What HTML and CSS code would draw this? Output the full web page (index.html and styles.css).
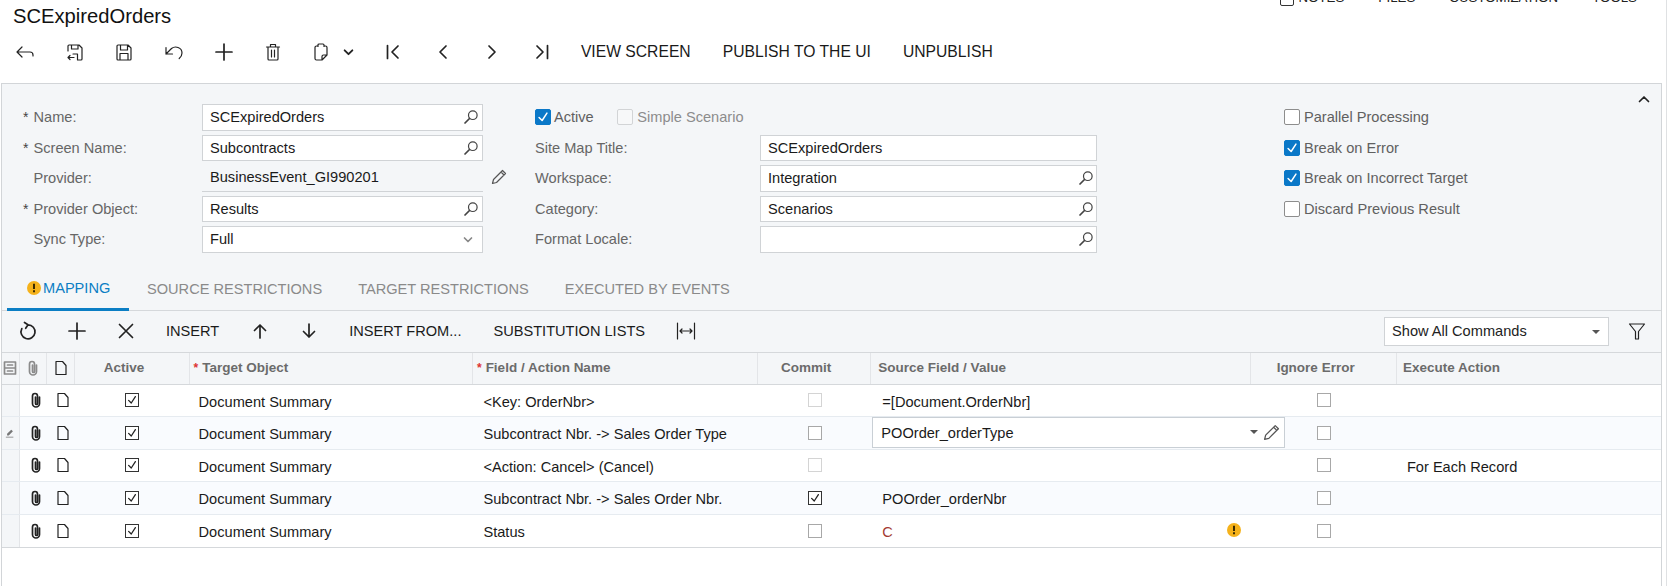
FILE: index.html
```html
<!DOCTYPE html>
<html lang="en">
<head>
<meta charset="utf-8">
<title>SCExpiredOrders</title>
<link rel="stylesheet" href="styles.css">
</head>
<body>
<svg class="sprite" aria-hidden="true">
  <symbol id="i-back" viewBox="0 0 20 20"><path d="M7 5L2 10l5 5M2 10h13q3 0 3 3v1"/></symbol>
  <symbol id="i-saveback" viewBox="0 0 20 20"><path d="M3 9V4a1 1 0 0 1 1-1h10l3 3v11a1 1 0 0 1-1 1h-3M6.500 3v4h6.500V3M12.500 18v-6H8M9 15.500H3M5 13.500l-2 2 2 2"/></symbol>
  <symbol id="i-save" viewBox="0 0 20 20"><path d="M3 4a1 1 0 0 1 1-1h10l3 3v11a1 1 0 0 1-1 1H4a1 1 0 0 1-1-1zM6.500 3v5h7V3M6 18v-6.500h8V18"/></symbol>
  <symbol id="i-undo" viewBox="0 0 20 20"><path d="M2 5.500v6.500h6.500M2 12l5.500-5.500c3.500-2.800 10.500-1.500 10.500 4.500 0 2.200-1 4-2.800 5.500"/></symbol>
  <symbol id="i-plus" viewBox="0 0 20 20"><path class="thick" d="M10 2v16M2 10h16"/></symbol>
  <symbol id="i-trash" viewBox="0 0 20 20"><path d="M3.500 5h13M7.500 5V2.500h5V5M5 5v12a1 1 0 0 0 1 1h8a1 1 0 0 0 1-1V5M8.500 8v7M11.500 8v7"/></symbol>
  <symbol id="i-paste" viewBox="0 0 20 20"><path d="M7 4H5.500A1.500 1.500 0 0 0 4 5.500v11A1.500 1.500 0 0 0 5.500 18H11l5-5V5.500A1.500 1.500 0 0 0 14.500 4H13M7 4.500V3a1 1 0 0 1 1-1h4a1 1 0 0 1 1 1v1.500M11 18v-3.500a1.500 1.500 0 0 1 1.500-1.500H16"/></symbol>
  <symbol id="i-down-small" viewBox="0 0 10 10"><path class="thick" d="M1.500 3L5 6.500 8.500 3"/></symbol>
  <symbol id="i-first" viewBox="0 0 20 20"><path class="thick" d="M4.500 3.500v13M15 4l-6 6 6 6"/></symbol>
  <symbol id="i-prev" viewBox="0 0 20 20"><path class="thick" d="M13 4l-6 6 6 6"/></symbol>
  <symbol id="i-next" viewBox="0 0 20 20"><path class="thick" d="M7 4l6 6-6 6"/></symbol>
  <symbol id="i-last" viewBox="0 0 20 20"><path class="thick" d="M15.500 3.500v13M5 4l6 6-6 6"/></symbol>
  <symbol id="i-search" viewBox="0 0 16 16"><circle cx="9.800" cy="6.200" r="4.300"/><path class="thick" d="M6.500 9.500L2 14"/></symbol>
  <symbol id="i-pencil" viewBox="0 0 16 16"><path d="M11.500 1.500l3 3-9 9-4 1 1-4zM10 3l3 3"/></symbol>
  <symbol id="i-refresh" viewBox="0 0 20 20"><path class="thick" d="M10 3.800a7 7 0 1 1-6.200 3.800M6.500 1.500l3.500 2.300-2.300 3.500"/></symbol>
  <symbol id="i-x" viewBox="0 0 20 20"><path class="thick" d="M3.500 3.500l13 13M16.500 3.500l-13 13"/></symbol>
  <symbol id="i-up" viewBox="0 0 20 20"><path class="thick" d="M10 17V4M4.500 9.500L10 4l5.500 5.500"/></symbol>
  <symbol id="i-down" viewBox="0 0 20 20"><path class="thick" d="M10 3v13M4.500 10.500L10 16l5.500-5.500"/></symbol>
  <symbol id="i-fit" viewBox="0 0 20 20"><path d="M1.500 2v16M18.500 2v16M4 10h12M6 8l-2 2 2 2M14 8l2 2-2 2"/></symbol>
  <symbol id="i-filter" viewBox="0 0 20 20"><path d="M2.500 3h15l-6 7.500V18h-3v-7.500z"/></symbol>
  <symbol id="i-clip" viewBox="0 0 16 16"><path class="thick" d="M11.500 5v6.500a3.500 3.500 0 0 1-7 0V4a2.500 2.500 0 0 1 5 0v7.500a1 1 0 0 1-2 0V5"/></symbol>
  <symbol id="i-doc" viewBox="0 0 16 16"><path d="M3 1.500h6.500L13 5.500v9H3z"/></symbol>
  <symbol id="i-cols" viewBox="0 0 16 16"><path class="thick" d="M2.500 2h11v12h-11zM2.500 8h11M5.500 5h5M5.500 11h5"/></symbol>
  <symbol id="i-check" viewBox="0 0 16 16"><path class="thick" d="M3.500 8.500L7 12l5.500-8.500"/></symbol>
  <symbol id="i-collapse" viewBox="0 0 12 8"><path class="thick" d="M1.500 6.500L6 2l4.500 4.500"/></symbol>
  <symbol id="i-edit-mark" viewBox="0 0 12 12"><path class="fill" d="M7.500 2l2 2-5 5H2.500V7zM1 10.500h9v1H1z"/></symbol>
  <symbol id="i-warn" viewBox="0 0 14 14"><circle class="warn-bg" cx="7" cy="7" r="7"/><path class="warn-fg" d="M6 2.800h2v5.200H6zM6 9.200h2v2H6z"/></symbol>
</svg>

<div class="page">
  <header class="head">
    <h1 class="title">SCExpiredOrders</h1>
    <nav class="top-nav">
      <span class="note-box"></span>
      <span class="top-link first">NOTES</span>
      <span class="top-link">FILES</span>
      <span class="top-link">CUSTOMIZATION</span>
      <span class="top-link">TOOLS</span>
    </nav>
  </header>

  <div class="toolbar">
    <span class="tool"><svg class="ic"><use href="#i-back"/></svg></span>
    <span class="tool"><svg class="ic"><use href="#i-saveback"/></svg></span>
    <span class="tool"><svg class="ic"><use href="#i-save"/></svg></span>
    <span class="tool"><svg class="ic"><use href="#i-undo"/></svg></span>
    <span class="tool"><svg class="ic"><use href="#i-plus"/></svg></span>
    <span class="tool"><svg class="ic"><use href="#i-trash"/></svg></span>
    <span class="tool-paste"><svg class="ic"><use href="#i-paste"/></svg><svg class="ic-sm"><use href="#i-down-small"/></svg></span>
    <span class="tool"><svg class="ic"><use href="#i-first"/></svg></span>
    <span class="tool"><svg class="ic"><use href="#i-prev"/></svg></span>
    <span class="tool"><svg class="ic"><use href="#i-next"/></svg></span>
    <span class="tool"><svg class="ic"><use href="#i-last"/></svg></span>
    <div class="tool-texts">
      <span>VIEW SCREEN</span>
      <span>PUBLISH TO THE UI</span>
      <span>UNPUBLISH</span>
    </div>
  </div>

  <main class="main">
    <section class="form">
      <svg class="collapse"><use href="#i-collapse"/></svg>
      <div class="col col-1">
        <div class="frow"><label class="lbl"><i class="req">*</i>Name:</label><div class="inp">SCExpiredOrders<svg class="sr"><use href="#i-search"/></svg></div></div>
        <div class="frow"><label class="lbl"><i class="req">*</i>Screen Name:</label><div class="inp">Subcontracts<svg class="sr"><use href="#i-search"/></svg></div></div>
        <div class="frow"><label class="lbl"><i class="req"></i>Provider:</label><div class="inp inp-ro">BusinessEvent_GI990201</div><svg class="edit"><use href="#i-pencil"/></svg></div>
        <div class="frow"><label class="lbl"><i class="req">*</i>Provider Object:</label><div class="inp">Results<svg class="sr"><use href="#i-search"/></svg></div></div>
        <div class="frow"><label class="lbl"><i class="req"></i>Sync Type:</label><div class="inp">Full<svg class="chev"><use href="#i-down-small"/></svg></div></div>
      </div>
      <div class="col col-2">
        <div class="frow">
          <span class="cb on"><svg><use href="#i-check"/></svg></span><span class="cb-lbl tight">Active</span>
          <span class="cb dis"></span><span class="cb-lbl tight muted">Simple Scenario</span>
        </div>
        <div class="frow"><label class="lbl lbl-2">Site Map Title:</label><div class="inp inp-2">SCExpiredOrders</div></div>
        <div class="frow"><label class="lbl lbl-2">Workspace:</label><div class="inp inp-2">Integration<svg class="sr"><use href="#i-search"/></svg></div></div>
        <div class="frow"><label class="lbl lbl-2">Category:</label><div class="inp inp-2">Scenarios<svg class="sr"><use href="#i-search"/></svg></div></div>
        <div class="frow"><label class="lbl lbl-2">Format Locale:</label><div class="inp inp-2"><svg class="sr"><use href="#i-search"/></svg></div></div>
      </div>
      <div class="col col-3">
        <div class="frow"><span class="cb"></span><span class="cb-lbl">Parallel Processing</span></div>
        <div class="frow"><span class="cb on"><svg><use href="#i-check"/></svg></span><span class="cb-lbl">Break on Error</span></div>
        <div class="frow"><span class="cb on"><svg><use href="#i-check"/></svg></span><span class="cb-lbl">Break on Incorrect Target</span></div>
        <div class="frow"><span class="cb"></span><span class="cb-lbl">Discard Previous Result</span></div>
      </div>
    </section>

    <nav class="tabs">
      <span class="tab active"><svg class="warn-ic"><use href="#i-warn"/></svg>MAPPING</span>
      <span class="tab">SOURCE RESTRICTIONS</span>
      <span class="tab">TARGET RESTRICTIONS</span>
      <span class="tab">EXECUTED BY EVENTS</span>
    </nav>

    <div class="grid-bar">
      <span class="tool2"><svg class="ic"><use href="#i-refresh"/></svg></span>
      <span class="tool2"><svg class="ic"><use href="#i-plus"/></svg></span>
      <span class="tool2"><svg class="ic"><use href="#i-x"/></svg></span>
      <span class="tool2-text t-insert">INSERT</span>
      <span class="tool2 t-up"><svg class="ic"><use href="#i-up"/></svg></span>
      <span class="tool2"><svg class="ic"><use href="#i-down"/></svg></span>
      <span class="tool2-text t-from">INSERT FROM...</span>
      <span class="tool2-text subst">SUBSTITUTION LISTS</span>
      <span class="tool2 t-fit"><svg class="ic"><use href="#i-fit"/></svg></span>
      <div class="bar-select">Show All Commands<span class="caret"></span></div>
      <span class="tool2 t-filter"><svg class="ic"><use href="#i-filter"/></svg></span>
    </div>

    <div class="grid">
      <div class="row row-head">
        <div class="c c-sel"><svg class="gi gi-muted"><use href="#i-cols"/></svg></div>
        <div class="c c-ic"><svg class="gi gi-muted"><use href="#i-clip"/></svg></div>
        <div class="c c-ic"><svg class="gi"><use href="#i-doc"/></svg></div>
        <div class="c c-mid">Active</div>
        <div class="c"><i class="star">*</i>Target Object</div>
        <div class="c"><i class="star">*</i>Field / Action Name</div>
        <div class="c c-mid">Commit</div>
        <div class="c c-src">Source Field / Value</div>
        <div class="c c-mid">Ignore Error</div>
        <div class="c c-exec">Execute Action</div>
      </div>

      <div class="row">
        <div class="c c-sel"></div>
        <div class="c c-ic"><svg class="gi"><use href="#i-clip"/></svg></div>
        <div class="c c-ic"><svg class="gi"><use href="#i-doc"/></svg></div>
        <div class="c c-mid"><span class="gcb on"><svg><use href="#i-check"/></svg></span></div>
        <div class="c c-t">Document Summary</div>
        <div class="c c-t c-f">&lt;Key: OrderNbr&gt;</div>
        <div class="c c-mid"><span class="gcb dis"></span></div>
        <div class="c c-t c-v">=[Document.OrderNbr]</div>
        <div class="c c-mid"><span class="gcb"></span></div>
        <div class="c c-t c-e"></div>
      </div>

      <div class="row alt">
        <div class="c c-sel"><svg class="mark"><use href="#i-edit-mark"/></svg></div>
        <div class="c c-ic"><svg class="gi"><use href="#i-clip"/></svg></div>
        <div class="c c-ic"><svg class="gi"><use href="#i-doc"/></svg></div>
        <div class="c c-mid"><span class="gcb on"><svg><use href="#i-check"/></svg></span></div>
        <div class="c c-t">Document Summary</div>
        <div class="c c-t c-f">Subcontract Nbr. -&gt; Sales Order Type</div>
        <div class="c c-mid"><span class="gcb"></span></div>
        <div class="c c-t c-v c-editing">
          <div class="editor">POOrder_orderType<span class="caret"></span><svg class="edit-sm"><use href="#i-pencil"/></svg></div>
        </div>
        <div class="c c-mid"><span class="gcb"></span></div>
        <div class="c c-t c-e"></div>
      </div>

      <div class="row">
        <div class="c c-sel"></div>
        <div class="c c-ic"><svg class="gi"><use href="#i-clip"/></svg></div>
        <div class="c c-ic"><svg class="gi"><use href="#i-doc"/></svg></div>
        <div class="c c-mid"><span class="gcb on"><svg><use href="#i-check"/></svg></span></div>
        <div class="c c-t">Document Summary</div>
        <div class="c c-t c-f">&lt;Action: Cancel&gt; (Cancel)</div>
        <div class="c c-mid"><span class="gcb dis"></span></div>
        <div class="c c-t c-v"></div>
        <div class="c c-mid"><span class="gcb"></span></div>
        <div class="c c-t c-e">For Each Record</div>
      </div>

      <div class="row alt">
        <div class="c c-sel"></div>
        <div class="c c-ic"><svg class="gi"><use href="#i-clip"/></svg></div>
        <div class="c c-ic"><svg class="gi"><use href="#i-doc"/></svg></div>
        <div class="c c-mid"><span class="gcb on"><svg><use href="#i-check"/></svg></span></div>
        <div class="c c-t">Document Summary</div>
        <div class="c c-t c-f">Subcontract Nbr. -&gt; Sales Order Nbr.</div>
        <div class="c c-mid"><span class="gcb on"><svg><use href="#i-check"/></svg></span></div>
        <div class="c c-t c-v">POOrder_orderNbr</div>
        <div class="c c-mid"><span class="gcb"></span></div>
        <div class="c c-t c-e"></div>
      </div>

      <div class="row">
        <div class="c c-sel"></div>
        <div class="c c-ic"><svg class="gi"><use href="#i-clip"/></svg></div>
        <div class="c c-ic"><svg class="gi"><use href="#i-doc"/></svg></div>
        <div class="c c-mid"><span class="gcb on"><svg><use href="#i-check"/></svg></span></div>
        <div class="c c-t">Document Summary</div>
        <div class="c c-t c-f">Status</div>
        <div class="c c-mid"><span class="gcb"></span></div>
        <div class="c c-t c-v c-err"><span>C</span><svg class="warn-cell"><use href="#i-warn"/></svg></div>
        <div class="c c-mid"><span class="gcb"></span></div>
        <div class="c c-t c-e"></div>
      </div>
    </div>
  </main>
</div>
</body>
</html>
```

FILE: styles.css
```css
* { box-sizing: border-box; }
html, body { margin: 0; height: 100%; overflow: hidden; background: #fff; }
body { font: 14.6px/18px "Liberation Sans", Arial, sans-serif; color: #111; }
i { font-style: normal; }
svg { fill: none; stroke: currentColor; stroke-width: 1.2; stroke-linecap: round; stroke-linejoin: round; display: block; }
.thick { stroke-width: 1.7; }
.fill { fill: currentColor; stroke: none; }
.sprite { position: absolute; width: 0; height: 0; }

.page { width: 1667px; height: 586px; border-right: 1px solid #dfe1e3; display: flex; flex-direction: column; }

/* page head */
.head { height: 32px; display: flex; justify-content: space-between; padding: 0 29px 0 13px; }
.title { margin: 4px 0 0; font-size: 20.2px; line-height: 24px; font-weight: 400; color: #111; }
.top-nav { display: flex; align-items: flex-start; margin-top: -10px; font-size: 13.3px; line-height: 16px; color: #222; }
.note-box { width: 14px; height: 16px; border: 1px solid #333; border-radius: 2px; margin-right: 5px; }
.top-link { margin-left: 34px; }
.top-link.first { margin-left: 0; }

/* main toolbar */
.toolbar { height: 40px; margin-bottom: 11px; display: flex; align-items: center; color: #222; }
.tool { width: 49.7px; display: flex; justify-content: center; }
.tool-paste { width: 70px; display: flex; align-items: center; padding-left: 13px; }
.ic { width: 20px; height: 20px; }
.ic-sm { width: 11px; height: 11px; margin-left: 12px; }
.tool-texts { display: flex; gap: 32px; padding-left: 14px; font-size: 15.7px; color: #1a1a1a; }

/* panel */
.main { flex: 1; margin-left: 1px; width: 1661px; border-left: 1px solid #d2d5d8; border-right: 1px solid #d2d5d8; border-top: 1px solid #d2d5d8; display: flex; flex-direction: column; background: #fff; }
.form { position: relative; height: 186px; padding: 20px 0 0 20px; display: flex; background: #f4f6f8; }
.collapse { position: absolute; right: 11px; top: 11px; width: 12px; height: 8px; color: #222; }
.col { display: flex; flex-direction: column; }
.col-1 { width: 513px; }
.col-2 { width: 749px; }
.frow { height: 30.5px; display: flex; align-items: flex-start; flex: none; }
.lbl { width: 180px; line-height: 27px; color: #666; display: flex; }
.lbl-2 { width: 225px; }
.req { width: 11.5px; flex: none; color: #444; font-size: 14px; padding-left: 1px; }
.inp { position: relative; width: 280.5px; height: 26.5px; padding: 0 7px; line-height: 25px; background: #fff; border: 1px solid #d0d3d6; color: #1a1a1a; }
.inp-2 { width: 337px; }
.inp-2 .sr { right: 2px; }
.inp-ro { background: transparent; border-width: 0 0 1px; padding-left: 8px; }
.sr { position: absolute; right: 3px; top: 4px; width: 16px; height: 16px; color: #444; }
.chev { position: absolute; right: 9px; top: 8px; width: 10px; height: 10px; color: #888; stroke-width: .7; }
.edit { width: 16px; height: 16px; margin: 4px 0 0 8.500px; color: #555; }

.cb { width: 16px; height: 16px; margin-top: 5px; flex: none; border: 1px solid #8d8d8d; border-radius: 2px; background: #fff; }
.cb.on { background: #0a78c8; border-color: #0a78c8; color: #fff; }
.cb.on svg { width: 14px; height: 14px; }
.cb.dis { border-color: #d2d4d6; background: #f7f8f9; margin-left: 0; }
.cb-lbl { margin-left: 4px; line-height: 26px; color: #606060; }
.cb-lbl.tight { margin-left: 3px; margin-right: 23px; }
.cb-lbl.muted { color: #8c8c8c; margin-left: 4.500px; }

/* tabs */
.tabs { height: 41px; padding-left: 5px; display: flex; gap: 0; background: #f4f6f8; border-bottom: 1px solid #d5d8db; }
.tab { height: 41px; padding: 10px 0 0; margin-right: 36px; color: #8a8a8a; }
.tab.active { width: 122px; margin-right: 18px; padding-left: 22px; position: relative; color: #0b7ec4; border-bottom: 3px solid #0b7ec4; display: flex; align-items: flex-start; padding-top: 9px; }
.warn-ic { width: 14px; height: 14px; position: absolute; left: 20px; top: 11px; }
.tab.active { text-indent: 14px; }
.warn-bg { fill: #f5b21b; stroke: none; }
.warn-fg { fill: #3a2a00; stroke: none; }

/* grid toolbar */
.grid-bar { height: 41px; display: flex; align-items: center; padding: 0 0 2px; background: #f4f6f8; color: #222; }
.tool2 { width: 49px; display: flex; justify-content: center; }
.tool2:first-child { margin-left: 1px; }
.tool2-text { font-size: 14.6px; color: #1a1a1a; }
.t-insert { margin-left: 16px; }
.t-up { margin-left: 16px; }
.t-from { margin-left: 16px; }
.tool2-text.subst { margin-left: 32px; }
.t-fit { margin-left: 16px; }
.bar-select { position: relative; width: 225px; height: 29px; margin: 0 0 -2px 674px; padding-left: 7px; line-height: 26px; background: #fff; border: 1px solid #d0d3d6; }
.caret { position: absolute; right: 8px; top: 12px; border-left: 4px solid transparent; border-right: 4px solid transparent; border-top: 4px solid #555; }
.t-filter { margin-left: 3px; }

/* grid */
.grid { display: flex; flex-direction: column; border-bottom: 1px solid #d5d8db; }
.row { display: grid; grid-template-columns: 17.600px 27.900px 27.900px 114.200px 283.400px 285px 113.400px 380px 145.600px 263.400px; height: 32.500px; border-bottom: 1px solid #e6ebf0; }
.row:last-child { border-bottom: 0; }
.row.alt { background: #f9fbfe; }
.row-head { height: 32.500px; background: #f4f6f8; border-top: 1px solid #d5d8db; border-bottom: 1px solid #d5d8db; font-weight: 700; font-size: 13.500px; color: #6b6b6b; }
.c { display: flex; align-items: center; min-width: 0; }
.row-head .c { border-right: 1px solid #e3e5e8; padding-left: 4px; }
.row-head .c:last-child { border-right: 0; }
.row-head .c-mid { justify-content: center; padding: 0 16px 0 0; }
.row-head .c-ic, .row-head .c-sel { padding: 0; justify-content: center; }
.c-sel { justify-content: center; background: #f4f6f8; border-right: 1px solid #e3e5e8; }
.c-ic { justify-content: center; padding-left: 4px; }
.c-mid { justify-content: center; }
.c-t { padding: 3px 0 0 9px; color: #1a1a1a; white-space: nowrap; }
.c-f { padding-left: 10.500px; }
.c-v { padding-left: 11px; position: relative; }
.c-e { padding-left: 10px; }
.c-src { padding-left: 7px !important; }
.c-exec { padding-left: 6px !important; }
.star { color: #d33; margin-right: 4px; font-size: 12px; }
.gi { width: 16px; height: 16px; color: #222; }
.gi-muted { color: #8b8b8b; }
.mark { width: 10px; height: 10px; color: #777; }
.gcb { width: 14px; height: 14px; border: 1px solid #a8a8a8; background: #fff; display: block; }
.gcb.on { border-color: #333; color: #222; }
.gcb.on svg { width: 12px; height: 12px; }
.gcb.dis { border-color: #d4d4d4; }
.editor { position: absolute; left: 1px; top: 0; width: 413px; height: 31px; z-index: 2; padding-left: 8px; line-height: 30px; background: #fff; border: 1px solid #c9cfd5; }
.editor .caret { right: 26px; top: 12px; }
.edit-sm { position: absolute; right: 4px; top: 6px; width: 17px; height: 17px; color: #555; }
.c-err { color: #a33a32; }
.warn-cell { position: absolute; left: 356px; top: 8px; width: 14px; height: 14px; }
```
